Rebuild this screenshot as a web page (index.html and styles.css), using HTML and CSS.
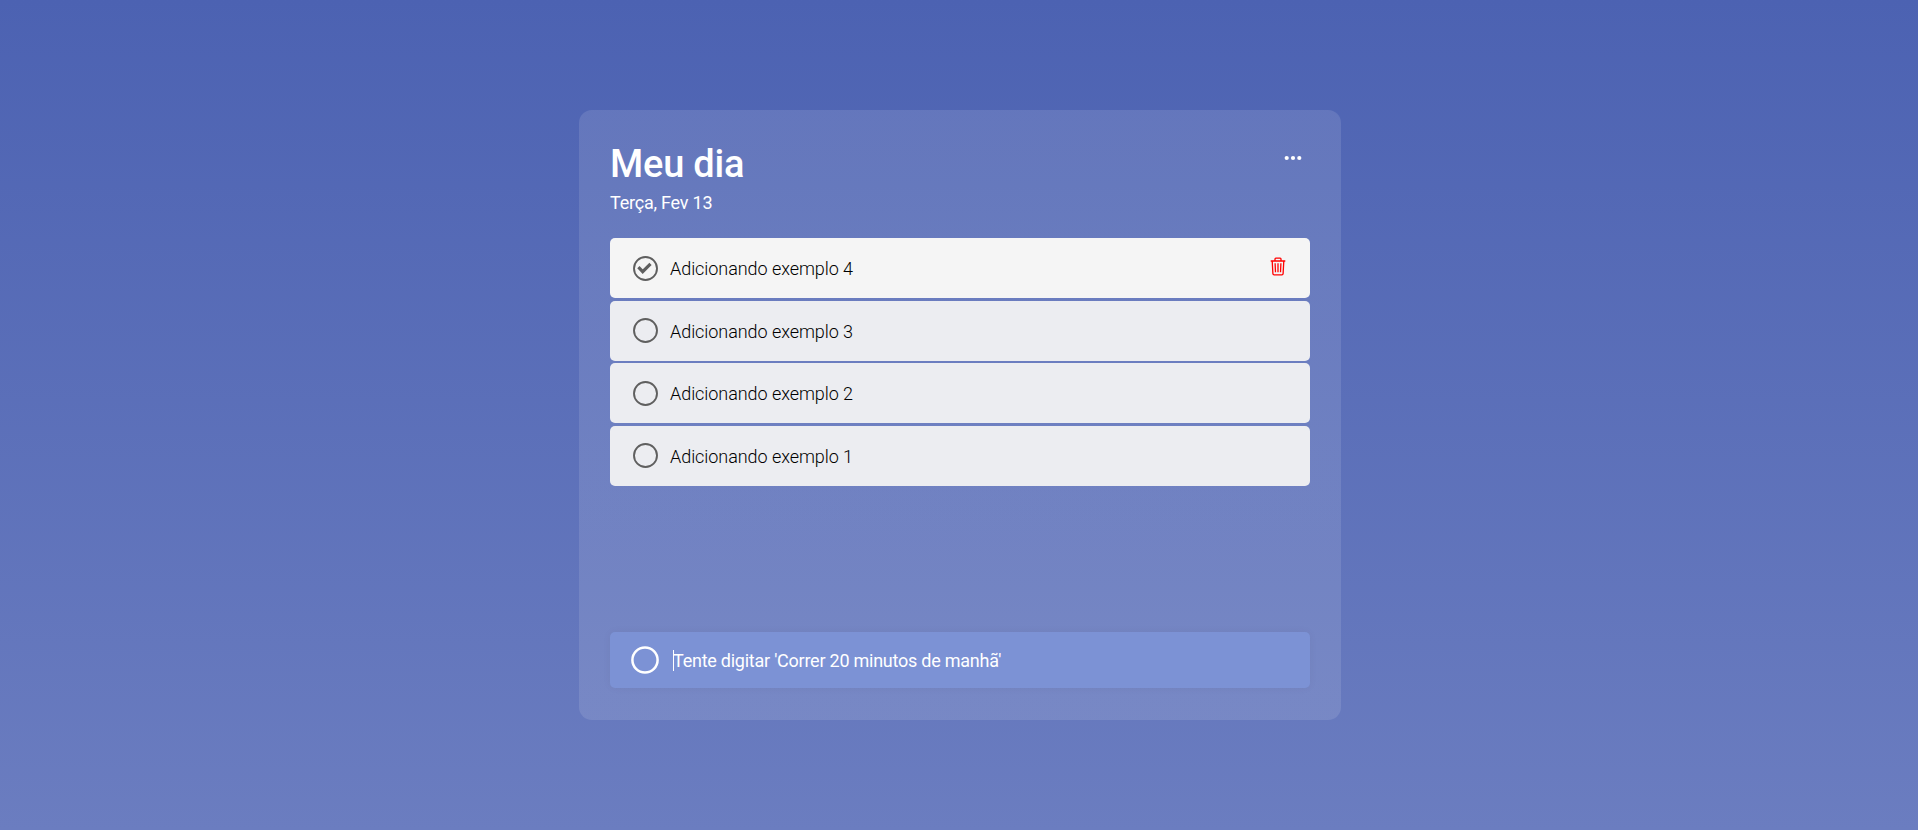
FILE: index.html
```html
<!DOCTYPE html>
<html lang="pt-BR">
<head>
<meta charset="utf-8">
<title>Meu dia</title>
<link rel="stylesheet" href="styles.css">
</head>
<body>
<main class="card">
  <header class="header">
    <div>
      <h1 class="title">Meu dia</h1>
      <p class="date">Terça, Fev 13</p>
    </div>
    <svg class="dots" width="18" height="6" viewBox="0 0 18 6"><circle cx="2.7" cy="3" r="2.1"/><circle cx="9" cy="3" r="2.1"/><circle cx="15.3" cy="3" r="2.1"/></svg>
  </header>
  <ul class="list">
    <li class="item item-active">
      <svg class="check" viewBox="0 0 25 25"><circle cx="12.5" cy="12.5" r="11.5"/><path d="M5.4 11.2l4.3 4.4 7.8-7.8"/></svg>
      <span class="label">Adicionando exemplo 4</span>
      <svg class="trash" width="16" height="19" viewBox="0 0 16 19"><path d="M.7 4h14.6M5 4V2q0-.9.9-.9h4.2q.9 0 .9.9V4M2.2 4l.7 12.6q.1 1.2 1.2 1.2h7.8q1.1 0 1.2-1.2L13.8 4M5.1 6.3l.4 9M8 6.3v9M10.9 6.3l-.4 9"/></svg>
    </li>
    <li class="item">
      <svg class="check" viewBox="0 0 25 25"><circle cx="12.5" cy="12.5" r="11.5"/></svg>
      <span class="label">Adicionando exemplo 3</span>
    </li>
    <li class="item">
      <svg class="check" viewBox="0 0 25 25"><circle cx="12.5" cy="12.5" r="11.5"/></svg>
      <span class="label">Adicionando exemplo 2</span>
    </li>
    <li class="item">
      <svg class="check" viewBox="0 0 25 25"><circle cx="12.5" cy="12.5" r="11.5"/></svg>
      <span class="label">Adicionando exemplo 1</span>
    </li>
  </ul>
  <div class="entry">
    <svg class="ring" width="28" height="28" viewBox="0 0 28 28"><circle cx="14" cy="14" r="12.6"/></svg>
    <span class="caret"></span>
    <span class="hint">Tente digitar 'Correr 20 minutos de manhã'</span>
  </div>
</main>
</body>
</html>
```
FILE: styles.css
```css
* {
  box-sizing: border-box;
  margin: 0;
  padding: 0;
}

body {
  height: 830px;
  padding: 110px 0 0 579px;
  overflow: hidden;
  background: linear-gradient(#4c62b2, #6b7dc0);
  font-family: Roboto, "Open Sans", sans-serif;
  color: #fff;
}

.card {
  display: flex;
  flex-direction: column;
  width: 762px;
  height: 610px;
  padding: 31px 31px 32px;
  border-radius: 13px;
  background: linear-gradient(rgba(255, 255, 255, .115), rgba(255, 255, 255, .11));
}

.header {
  display: flex;
  justify-content: space-between;
  height: 97px;
}

.title {
  font-size: 38px;
  line-height: 46px;
  font-weight: 500;
  letter-spacing: -.2px;
}

.date {
  margin-top: 4px;
  font-size: 18px;
  line-height: 24px;
  letter-spacing: -.22px;
}

.dots {
  margin: 14px 8px 0 0;
  fill: #fff;
}

.list {
  display: flex;
  flex-direction: column;
  gap: 2.6px;
  list-style: none;
}

.item {
  display: flex;
  align-items: center;
  height: 60px;
  padding: 0 24px 0 23px;
  border-radius: 5px;
  background: #ecedf1;
  color: #000;
}

.item-active {
  background: #f5f5f5;
}

.check {
  width: 25px;
  height: 25px;
  fill: none;
  stroke: #5f5f5f;
  stroke-width: 1.9;
}

.check path {
  stroke-width: 3.2;
}

.label {
  margin-left: 12px;
  padding-top: 2px;
  font-size: 18px;
  line-height: 24px;
  font-weight: 300;
  letter-spacing: -.06px;
}

.trash {
  margin: -4px 0 0 auto;
  fill: none;
  stroke: #f00;
  stroke-width: 1.3;
  stroke-linejoin: round;
}

.entry {
  display: flex;
  align-items: center;
  height: 56px;
  margin-top: auto;
  padding-left: 20.5px;
  border-radius: 5px;
  background: #7c92d5;
  box-shadow: 0 0 10px rgba(0, 0, 0, .04);
}

.ring {
  fill: none;
  stroke: #fff;
  stroke-width: 2.5;
}

.caret {
  width: 1px;
  height: 21px;
  margin: 1px -1px 0 14.5px;
  background: #fff;
}

.hint {
  padding-top: 2px;
  font-size: 18px;
  line-height: 24px;
  letter-spacing: -.24px;
}
```
